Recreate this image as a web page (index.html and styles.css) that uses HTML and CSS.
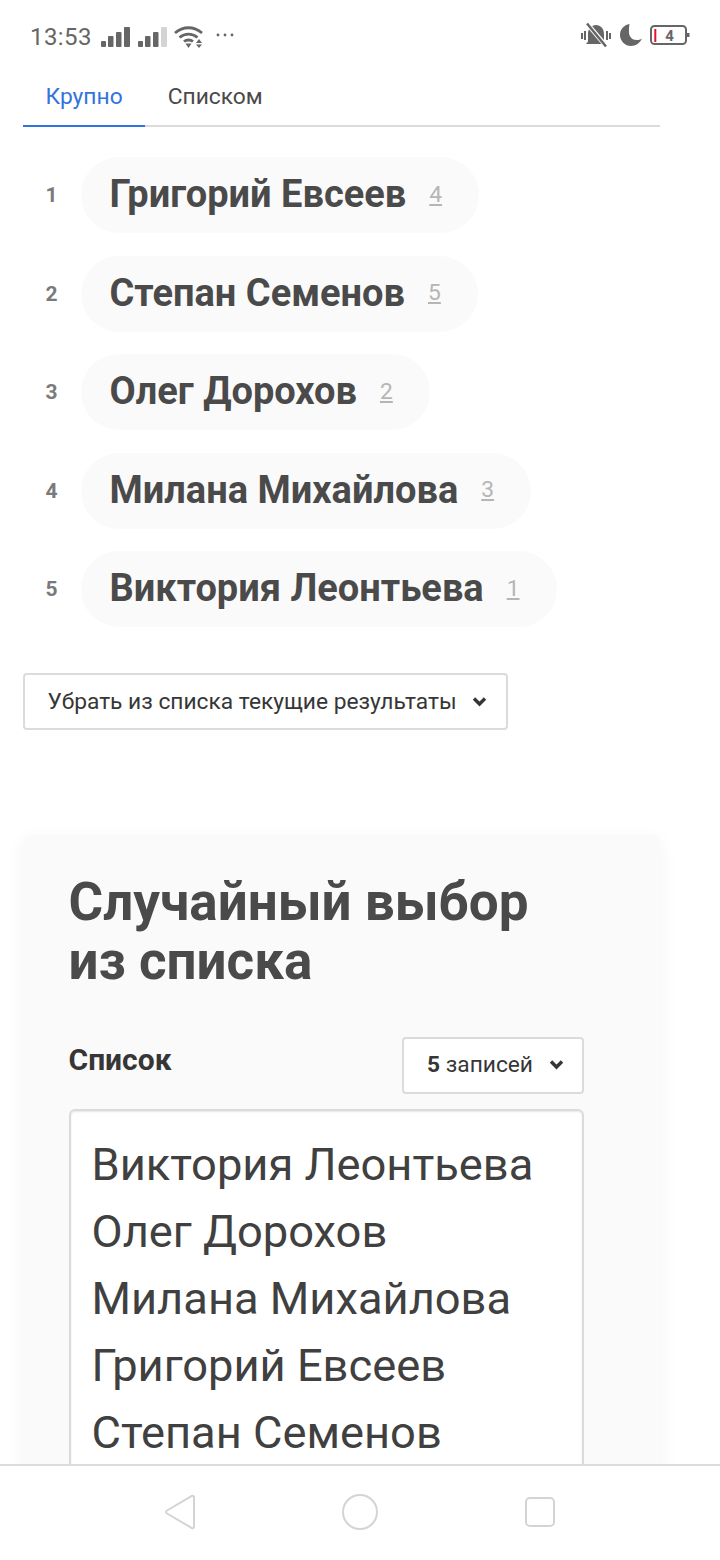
FILE: index.html
```html
<!DOCTYPE html>
<html lang="ru">
<head>
<meta charset="utf-8">
<title>Случайный выбор из списка</title>
<link rel="stylesheet" href="styles.css">
</head>
<body>
<div class="screen">
  <header class="status">
    <div class="status-left">
      <span class="time">13:53</span>
      <svg class="signal" width="32" height="20" viewBox="0 0 32 20"><g fill="#666"><rect x="1" y="14" width="5" height="6" rx="1"/><rect x="8" y="9" width="5.500" height="11" rx="1"/><rect x="16" y="5" width="5.500" height="15" rx="1"/><rect x="24" y="0" width="6" height="20" rx="1"/></g></svg>
      <svg class="signal" width="32" height="20" viewBox="0 0 32 20"><g fill="#666"><rect x="1" y="14" width="5" height="6" rx="1"/><rect x="8" y="9" width="5.500" height="11" rx="1"/><rect x="16" y="5" width="5.500" height="15" rx="1"/></g><rect x="24" y="0" width="6" height="20" rx="1" fill="#d4d4d4"/></svg>
      <svg class="wifi" width="30" height="24" viewBox="0 0 30 24"><g fill="none" stroke="#666" stroke-width="2.800"><path d="M1 8C9 1 20 1 28 8"/><path d="M5.500 12.500C11 8 18 8 23.500 12.500"/><path d="M10 16.500C12.500 14.500 16.500 14.500 19 16.500"/></g><path d="M11.500 18.500h6l-3 4.500Z" fill="#666"/><path d="M22 18h6l-3-4ZM22 19.500h6l-3 3.500Z" fill="#666"/></svg>
      <svg class="dots" width="20" height="6" viewBox="0 0 20 6"><g fill="#666"><circle cx="3" cy="3" r="1.400"/><circle cx="10" cy="3" r="1.400"/><circle cx="17" cy="3" r="1.400"/></g></svg>
    </div>
    <div class="status-right">
      <svg width="32" height="26" viewBox="0 0 32 26"><g fill="#666"><path d="M8 19.500V12C8 6.500 11.500 3 16 3S24 6.500 24 12V19.500L26 22H6Z"/><rect x="1" y="11" width="2" height="6"/><rect x="4" y="9" width="2" height="9"/><rect x="26" y="9" width="2" height="9"/><rect x="29" y="11" width="2" height="6"/></g><path d="M7 1.500L26 24" stroke="#fff" stroke-width="4.500"/><path d="M7 1.500L26 24.500" stroke="#666" stroke-width="2.500"/></svg>
      <svg width="24" height="24" viewBox="0 0 24 24"><path d="M10.500 1C5 2 1 6.500 1 12C1 18 6 23 12 23C17 23 21 20 23 15.500C21.500 16.500 19.500 17 17.500 17C13 17 10 13.500 10 9C10 6 10 3.500 10.500 1Z" fill="#666"/></svg>
      <svg width="40" height="20" viewBox="0 0 40 20"><rect x="1" y="1" width="35" height="18" rx="3.500" fill="none" stroke="#666" stroke-width="2"/><rect x="37" y="8" width="2.500" height="4" fill="#666"/><rect x="4.300" y="4" width="2" height="13" fill="#e8112d"/><text x="19.500" y="15.500" class="batt">4</text></svg>
    </div>
  </header>

  <main class="content">
    <nav class="tabs">
      <a class="tab tab-active">Крупно</a>
      <a class="tab">Списком</a>
    </nav>

    <ol class="results">
      <li class="result"><span class="rank">1</span><span class="pill"><span class="name">Григорий Евсеев</span><span class="count">4</span></span></li>
      <li class="result"><span class="rank">2</span><span class="pill"><span class="name">Степан Семенов</span><span class="count">5</span></span></li>
      <li class="result"><span class="rank">3</span><span class="pill"><span class="name">Олег Дорохов</span><span class="count">2</span></span></li>
      <li class="result"><span class="rank">4</span><span class="pill"><span class="name">Милана Михайлова</span><span class="count">3</span></span></li>
      <li class="result"><span class="rank">5</span><span class="pill"><span class="name">Виктория Леонтьева</span><span class="count">1</span></span></li>
    </ol>

    <button class="select select-wide">
      <span>Убрать из списка текущие результаты</span>
      <svg class="chev" width="15" height="11" viewBox="0 0 15 11"><path d="M2 2.500L7.500 8L13 2.500" fill="none" stroke="#363636" stroke-width="3.400"/></svg>
    </button>

    <section class="card">
      <h1 class="card-title">Случайный выбор из&nbsp;списка</h1>
      <div class="list-head">
        <span class="list-label">Список</span>
        <button class="select select-small">
          <span><b>5</b> записей</span>
          <svg class="chev" width="15" height="11" viewBox="0 0 15 11"><path d="M2 2.500L7.500 8L13 2.500" fill="none" stroke="#363636" stroke-width="3.400"/></svg>
        </button>
      </div>
      <div class="textarea">
        <div>Виктория Леонтьева</div>
        <div>Олег Дорохов</div>
        <div>Милана Михайлова</div>
        <div>Григорий Евсеев</div>
        <div>Степан Семенов</div>
      </div>
    </section>
  </main>

  <footer class="navbar">
    <svg width="30" height="36" viewBox="0 0 30 36"><path d="M29 3.500C29 2 28 1.300 26.500 2.200L2 16.500C.7 17.300 .7 18.700 2 19.500L26.500 33.800C28 34.700 29 34 29 32.500Z" fill="none" stroke="#d4d4d4" stroke-width="2"/></svg>
    <svg width="36" height="36" viewBox="0 0 36 36"><circle cx="18" cy="18" r="17" fill="none" stroke="#d4d4d4" stroke-width="2"/></svg>
    <svg width="30" height="30" viewBox="0 0 30 30"><rect x="1" y="1" width="28" height="28" rx="4" fill="none" stroke="#d4d4d4" stroke-width="2"/></svg>
  </footer>
</div>
</body>
</html>
```
FILE: styles.css
```css
* { box-sizing: border-box; }
html, body { margin: 0; padding: 0; }
body { font-family: Roboto, "Liberation Sans", sans-serif; background: #fff; color: #4a4a4a; }
.screen { position: relative; width: 720px; height: 1560px; overflow: hidden; background: #fff; }

.status { height: 70px; padding: 0 30px; display: flex; justify-content: space-between; align-items: center; }
.status-left { display: flex; align-items: center; margin-top: 3px; }
.time { font-size: 24px; color: #666; letter-spacing: .4px; margin-right: 8px; }
.signal { margin-right: 5px; }
.wifi { margin: 0 11px 0 0; }
.dots { margin-bottom: 3px; }
.status-right { display: flex; align-items: center; gap: 7px; }
.batt { font: 700 15px Roboto, sans-serif; fill: #666; text-anchor: middle; }

.content { padding: 0 60px 0 23px; }
.tabs { display: flex; height: 57px; border-bottom: 2px solid #dbdbdb; }
.tab { height: 57px; padding: 13px 22.500px 0; font-size: 22.800px; line-height: 28px; color: #4a4a4a; }
.tab-active { color: #3273dc; border-bottom: 2px solid #3273dc; }

.results { list-style: none; margin: 30px 0 0; padding: 0; display: flex; flex-direction: column; gap: 22.500px; }
.result { display: flex; align-items: center; height: 76px; }
.rank { width: 58px; padding-left: 22.500px; font-size: 21px; font-weight: 700; color: #7a7a7a; }
.pill { display: flex; align-items: center; height: 76px; padding: 0 37px 2px 28.500px; border-radius: 38px; background: #fafafa; }
.name { font-size: 38px; font-weight: 700; color: #4a4a4a; }
.count { margin-left: 23px; font-size: 22.800px; color: #b5b5b5; text-decoration: underline; }

.select { display: flex; align-items: center; justify-content: space-between; background: #fff; border: 2px solid #dbdbdb; border-radius: 4px; font-family: inherit; font-size: 22.750px; color: #363636; padding: 0 19px 0 22.500px; height: 56.500px; }
.select-wide { width: 485px; margin-top: 46px; }
.select-small { width: 181.500px; padding: 0 18px 1px 23px; }
.select b { font-weight: 700; }

.card { margin-top: 105.500px; padding: 38px 76.500px 0 45.500px; height: 760px; background: #fafafa; border-radius: 6px; box-shadow: 0 5px 20px rgba(10, 10, 10, .05); }
.card-title { margin: 0; width: 500px; font-size: 53px; line-height: 59px; font-weight: 700; color: #4a4a4a; }
.list-head { display: flex; justify-content: space-between; align-items: flex-start; margin-top: 46px; }
.list-label { margin-top: 6px; font-size: 30px; line-height: 34px; font-weight: 700; color: #363636; }
.textarea { margin-top: 15.500px; padding: 19.500px 21px; height: 500px; background: #fff; border: 2px solid #dbdbdb; border-radius: 6px; font-size: 45.250px; line-height: 67px; color: #404040; box-shadow: inset 0 1px 2px rgba(10, 10, 10, .1); }

.navbar { position: absolute; left: 0; right: 0; bottom: 0; height: 96px; padding: 0 165px 3px; display: flex; justify-content: space-between; align-items: center; background: #fff; border-top: 2px solid #dcdbe0; }
```
